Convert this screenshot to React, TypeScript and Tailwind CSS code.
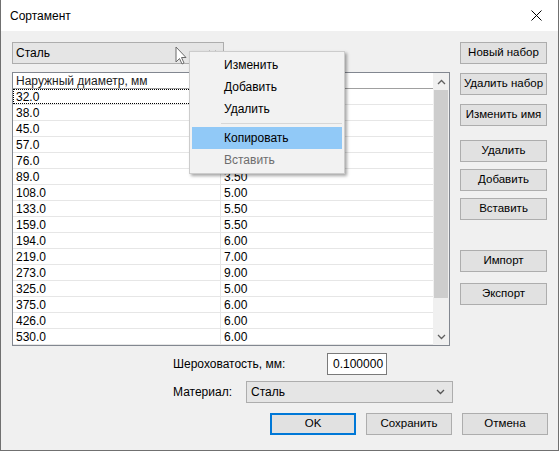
import React from "react"

// second column of the first rows is hidden under the context menu
const rows: [string, string][] = [
  ["32.0", ""],
  ["38.0", ""],
  ["45.0", ""],
  ["57.0", ""],
  ["76.0", ""],
  ["89.0", "3.50"],
  ["108.0", "5.00"],
  ["133.0", "5.50"],
  ["159.0", "5.50"],
  ["194.0", "6.00"],
  ["219.0", "7.00"],
  ["273.0", "9.00"],
  ["325.0", "5.00"],
  ["375.0", "6.00"],
  ["426.0", "6.00"],
  ["530.0", "6.00"],
]

function Btn({ label, className = "" }: { label: string; className?: string }) {
  return (
    <div
      className={`h-[22px] flex items-center justify-center bg-[#e1e1e1] border border-[#adadad] text-[11.5px] text-black whitespace-nowrap ${className}`}
    >
      {label}
    </div>
  )
}

function Chevron({ up = false, color = "#606060" }: { up?: boolean; color?: string }) {
  return (
    <svg width="9" height="6" viewBox="0 0 9 6">
      <path
        d={up ? "M1 5 L4.5 1.5 L8 5" : "M1 1 L4.5 4.5 L8 1"}
        fill="none"
        stroke={color}
        strokeWidth="1.3"
      />
    </svg>
  )
}

export default function App() {
  return (
    <div
      className="relative w-[559px] h-[451px] flex flex-col bg-[#f0f0f0] border-x border-b border-[#707070] overflow-hidden text-black"
      style={{ fontFamily: '"Liberation Sans", Arial, sans-serif' }}
    >
      {/* title bar */}
      <div className="h-[31px] bg-white flex items-center pl-[9px] pr-[16px] shrink-0">
        <span className="text-[12px]">Сортамент</span>
        <svg className="ml-auto" width="11" height="11" viewBox="0 0 11 11">
          <path d="M0.5 0.5 L10.5 10.5 M10.5 0.5 L0.5 10.5" stroke="#000" strokeWidth="1" />
        </svg>
      </div>

      {/* body */}
      <div className="flex pl-[11px] pt-[11px]">
        <div className="w-[438px] flex flex-col">
          <div className="w-[212px] h-[22px] flex items-center bg-[#e5e5e5] border border-[#adadad] pl-[3px] pr-[6px] text-[12px]">
            <span>Сталь</span>
            <span className="ml-auto">
              <Chevron color="#555" />
            </span>
          </div>

          <div className="mt-[8px] h-[274px] flex bg-white border border-[#828790]">
            <div className="flex-1 flex flex-col">
              <div className="h-[16px] flex border-b border-[#a0a0a0] text-[12px] text-[#1e1e1e]">
                <div className="w-[208px] pl-[3px] flex items-center border-r border-[#e5e5e5] leading-none">
                  Наружный диаметр, мм
                </div>
                <div className="flex-1" />
              </div>
              {rows.map(([d, t], i) => (
                <div key={d} className="h-[16px] flex border-b border-[#e6e6e6] text-[12px]">
                  <div
                    className={`w-[208px] pl-[3px] flex items-center border-r border-[#e6e6e6] ${
                      i === 0 ? "outline outline-1 outline-dotted outline-black -outline-offset-1" : ""
                    }`}
                  >
                    {d}
                  </div>
                  <div className="flex-1 pl-[3px] flex items-center">{t}</div>
                </div>
              ))}
            </div>
            {/* scrollbar */}
            <div className="w-[16px] flex flex-col bg-[#f0f0f0]">
              <div className="h-[17px] flex items-center justify-center">
                <Chevron up />
              </div>
              <div className="flex-1 flex flex-col">
                <div className="h-[208px] mx-[1px] bg-[#cdcdcd]" />
              </div>
              <div className="h-[17px] flex items-center justify-center">
                <Chevron />
              </div>
            </div>
          </div>
        </div>

        <div className="ml-[10px] w-[87px] flex flex-col">
          <Btn label="Новый набор" />
          <Btn label="Удалить набор" className="mt-[9px]" />
          <Btn label="Изменить имя" className="mt-[9px]" />
          <Btn label="Удалить" className="mt-[14px]" />
          <Btn label="Добавить" className="mt-[7px]" />
          <Btn label="Вставить" className="mt-[7px]" />
          <Btn label="Импорт" className="mt-[30px]" />
          <Btn label="Экспорт" className="mt-[11px]" />
        </div>
      </div>

      {/* bottom */}
      <div className="mt-[7px] pl-[172px] flex items-center h-[22px] text-[12px]">
        <span className="w-[154px]">Шероховатость, мм:</span>
        <div className="w-[60px] h-[22px] bg-white border border-[#7a7a7a] flex items-center pl-[5px]">
          0.100000
        </div>
      </div>
      <div className="mt-[6px] pl-[172px] flex items-center h-[22px] text-[12px]">
        <span className="w-[73px]">Материал:</span>
        <div className="w-[207px] h-[22px] flex items-center bg-[#e5e5e5] border border-[#adadad] pl-[4px] pr-[7px]">
          <span>Сталь</span>
          <span className="ml-auto">
            <Chevron color="#555" />
          </span>
        </div>
      </div>
      <div className="mt-[10px] pl-[269px] flex gap-[10px]">
        <div className="w-[86px] h-[22px] flex items-center justify-center bg-[#e1e1e1] border-2 border-[#0078d7] text-[11.5px]">
          OK
        </div>
        <Btn label="Сохранить" className="w-[86px]" />
        <Btn label="Отмена" className="w-[86px]" />
      </div>

      {/* context menu */}
      <div className="absolute left-[188px] top-[51px] w-[156px] bg-[#f2f2f2] border border-[#cccccc] p-[2px] shadow-[2px_2px_3px_rgba(0,0,0,0.35)] text-[12px]">
        <div className="h-[22px] flex items-center pl-[32px]">Изменить</div>
        <div className="h-[22px] flex items-center pl-[32px]">Добавить</div>
        <div className="h-[22px] flex items-center pl-[32px]">Удалить</div>
        <div className="h-[7px] flex items-center pl-[29px]">
          <div className="h-[1px] flex-1 bg-[#d7d7d7]" />
        </div>
        <div className="h-[22px] flex items-center pl-[32px] bg-[#91c9f7]">Копировать</div>
        <div className="h-[22px] flex items-center pl-[32px] text-[#6d6d6d]">Вставить</div>
      </div>

      {/* mouse cursor */}
      <svg className="absolute left-[174px] top-[46px]" width="13" height="20" viewBox="0 0 13 20">
        <path
          d="M1 1 L1 16 L4.5 12.5 L7 18 L9 17 L6.5 11.5 L11 11.5 Z"
          fill="#fff"
          stroke="#6a6a6a"
          strokeWidth="1"
          strokeLinejoin="round"
        />
      </svg>
    </div>
  )
}
